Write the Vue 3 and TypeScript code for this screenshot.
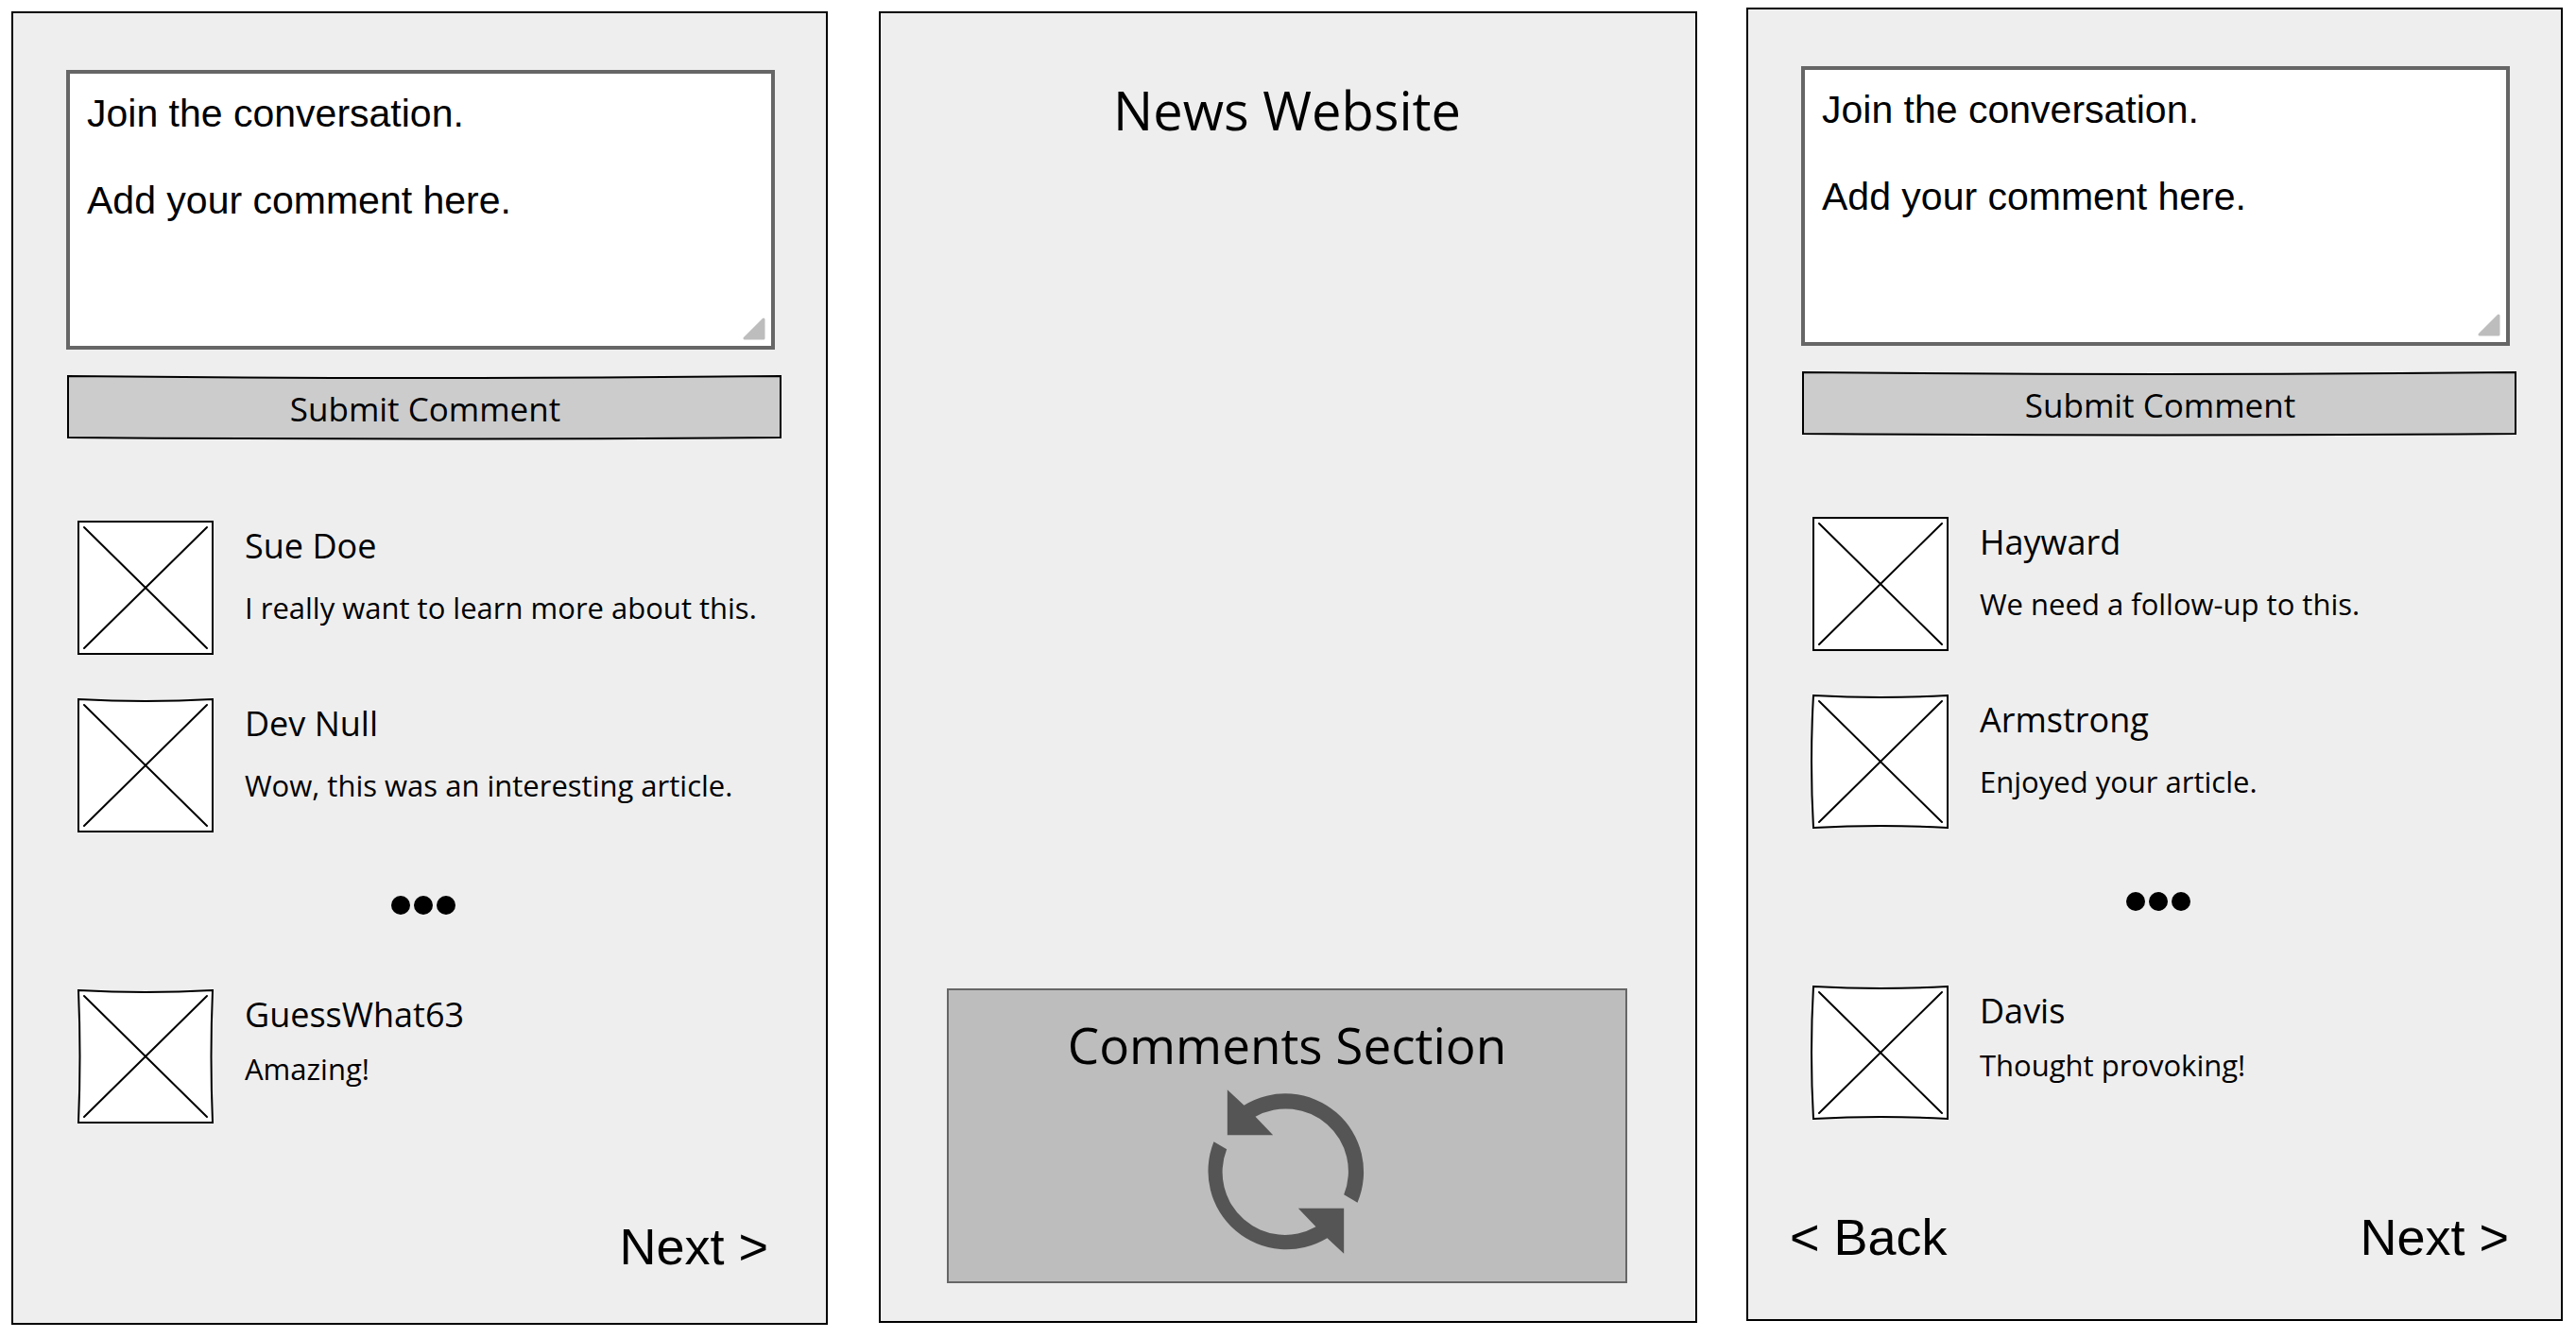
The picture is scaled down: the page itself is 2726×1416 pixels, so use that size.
<script setup lang="ts">
import { ref } from 'vue'

interface Comment {
  author: string
  text: string
  frame: string
}

interface Page {
  id: string
  hasBack: boolean
  recent: Comment[]
  last: Comment
}

// Hand-drawn outlines of the avatar box, each edge bowed a little differently
const frames = {
  straight: 'M1 1 H143 V141 H1 Z',
  sagTop: 'M1 1 Q72 5 143 1 V141 H1 Z',
  pinched: 'M1 1 Q72 5 143 1 Q140 71 143 141 H1 Q4 71 1 1 Z',
  bulgeLeft: 'M1 1 Q72 5 143 1 V141 Q72 137 1 141 Q-3 71 1 1 Z',
}

const pages: Page[] = [
  {
    id: 'first',
    hasBack: false,
    recent: [
      { author: 'Sue Doe', text: 'I really want to learn more about this.', frame: frames.straight },
      { author: 'Dev Null', text: 'Wow, this was an interesting article.', frame: frames.sagTop },
    ],
    last: { author: 'GuessWhat63', text: 'Amazing!', frame: frames.pinched },
  },
  {
    id: 'second',
    hasBack: true,
    recent: [
      { author: 'Hayward', text: 'We need a follow-up to this.', frame: frames.straight },
      { author: 'Armstrong', text: 'Enjoyed your article.', frame: frames.bulgeLeft },
    ],
    last: { author: 'Davis', text: 'Thought provoking!', frame: frames.bulgeLeft },
  },
]

const prompt = 'Join the conversation.\n\nAdd your comment here.'
const drafts = ref<string[]>([prompt, prompt])
</script>

<template>
  <main class="board">
    <section
      v-for="(page, i) in pages"
      :key="page.id"
      class="panel comments"
      :class="page.id"
    >
      <form class="composer" @submit.prevent>
        <div class="field">
          <textarea v-model="drafts[i]" aria-label="Comment" spellcheck="false"></textarea>
          <svg class="grip" viewBox="0 0 24 24" aria-hidden="true">
            <path d="M22 2 V22 H2 Z" />
          </svg>
        </div>
        <button class="submit" type="submit">
          <svg class="outline" viewBox="0 0 756 68" preserveAspectRatio="none" aria-hidden="true">
            <path d="M1 1 Q378 5 755 1 V66 Q378 69 1 66 Z" />
          </svg>
          <span class="caption">Submit Comment</span>
        </button>
      </form>

      <div class="thread">
        <article v-for="c in page.recent" :key="c.author" class="comment">
          <svg class="avatar" viewBox="0 0 144 142" aria-hidden="true">
            <path class="frame" :d="c.frame" />
            <path class="cross" d="M7 7 L137 135 M137 7 L7 135" />
          </svg>
          <div class="body">
            <h3 class="author">{{ c.author }}</h3>
            <p class="text">{{ c.text }}</p>
          </div>
        </article>
      </div>

      <div class="dots" aria-hidden="true"><i></i><i></i><i></i></div>

      <article class="comment last">
        <svg class="avatar" viewBox="0 0 144 142" aria-hidden="true">
          <path class="frame" :d="page.last.frame" />
          <path class="cross" d="M7 7 L137 135 M137 7 L7 135" />
        </svg>
        <div class="body">
          <h3 class="author">{{ page.last.author }}</h3>
          <p class="text">{{ page.last.text }}</p>
        </div>
      </article>

      <nav class="pager" aria-label="Comment pages">
        <button v-if="page.hasBack" type="button">&lt; Back</button>
        <button class="next" type="button">Next &gt;</button>
      </nav>
    </section>

    <section class="panel site">
      <h1 class="title">News Website</h1>
      <div class="loading">
        <h2 class="subtitle">Comments Section</h2>
        <svg class="refresh" viewBox="110 69 500 522" aria-hidden="true">
          <path d="M175 70 L228 119 A249 249 0 0 1 588 428 L545 403 A199 199 0 0 0 264 155 L320 214 H175 Z" />
          <path d="M545 590 L492 541 A249 249 0 0 1 132 235 L173 259 A199 199 0 0 0 456 505 L400 446 H545 Z" />
        </svg>
      </div>
    </section>
  </main>
</template>

<style>
body {
  margin: 0;
  background: #fff;
}
</style>

<style scoped>
.board {
  --hand: "Comic Sans MS", "Open Sans", sans-serif;
  --plain: "Liberation Sans", Arial, sans-serif;
  display: grid;
  grid-template-columns: repeat(3, minmax(0, 1fr));
  column-gap: 54px;
  padding: 8px 14px 14px 12px;
  color: #000;
  font-family: var(--hand);
}

.panel {
  box-sizing: border-box;
  display: flex;
  flex-direction: column;
  border: 2px solid #000;
  background: #eee;
}

.first {
  order: 1;
  margin-top: 4px;
}

.site {
  order: 2;
  margin: 4px -2px 2px 0;
  padding: 62px 72px 40px 70px;
}

.second {
  order: 3;
  margin-bottom: 4px;
}

.comments {
  padding: 60px 47px 50px 56px;
}

.composer {
  display: flex;
  flex-direction: column;
  gap: 27px;
}

.field {
  position: relative;
  margin-right: 7px;
}

textarea {
  display: block;
  box-sizing: border-box;
  width: 100%;
  height: 296px;
  margin: 0;
  padding: 19px 18px;
  border: 4px solid #666;
  border-radius: 0;
  outline: none;
  resize: none;
  overflow: hidden;
  background: #fff;
  color: #000;
  font: 41px/46px var(--plain);
}

.grip {
  position: absolute;
  right: 10px;
  bottom: 10px;
  width: 24px;
  height: 24px;
}

.grip path {
  fill: #bdbdbd;
  stroke: #bdbdbd;
  stroke-width: 3;
  stroke-linejoin: round;
}

button {
  margin: 0;
  padding: 0;
  border: 0;
  background: none;
  color: #000;
  cursor: pointer;
}

.submit {
  position: relative;
  height: 68px;
  margin-left: 1px;
  padding: 4px 0 0 2px;
  font: 35px/64px var(--hand);
}

.outline {
  position: absolute;
  inset: 0;
  width: 100%;
  height: 100%;
  overflow: visible;
}

.outline path {
  fill: #ccc;
  stroke: #000;
  stroke-width: 2;
  vector-effect: non-scaling-stroke;
}

.caption {
  position: relative;
}

.thread {
  display: flex;
  flex-direction: column;
  gap: 46px;
  margin-top: 86px;
}

.comment {
  display: flex;
  gap: 33px;
  margin-left: 12px;
}

.avatar {
  flex: none;
  width: 144px;
  height: 142px;
  overflow: visible;
}

.frame {
  fill: #fff;
  stroke: #000;
  stroke-width: 2;
}

.cross {
  fill: none;
  stroke: #000;
  stroke-width: 2;
  stroke-linecap: round;
}

.body {
  display: flex;
  flex-direction: column;
  gap: 19px;
  white-space: nowrap;
}

.last .body {
  gap: 11px;
}

.author {
  margin: 0;
  font-size: 36px;
  font-weight: 400;
  line-height: 53px;
}

.text {
  margin: 0;
  font-size: 31px;
  line-height: 40px;
}

.dots {
  display: flex;
  justify-content: center;
  gap: 4px;
  margin: 67px 2px 79px 0;
}

.dots i {
  width: 20px;
  height: 20px;
  border-radius: 50%;
  background: #000;
}

.pager {
  display: flex;
  justify-content: space-between;
  margin: 99px 14px 0 0;
}

.second .pager {
  margin: 93px 8px 6px -12px;
}

.pager button {
  font: 54px/62px var(--plain);
}

.pager .next {
  margin-left: auto;
}

.title,
.subtitle {
  margin: 0;
  font-size: 56px;
  font-weight: 400;
  line-height: 80px;
  text-align: center;
}

.subtitle {
  font-size: 53px;
}

.loading {
  box-sizing: border-box;
  display: flex;
  flex-direction: column;
  align-items: center;
  height: 312px;
  margin-top: auto;
  padding-top: 18px;
  border: 2px solid #666;
  background: #bdbdbd;
}

.refresh {
  width: 167px;
  height: 174px;
  margin: 7px 4px 0 0;
  fill: #555;
}
</style>
